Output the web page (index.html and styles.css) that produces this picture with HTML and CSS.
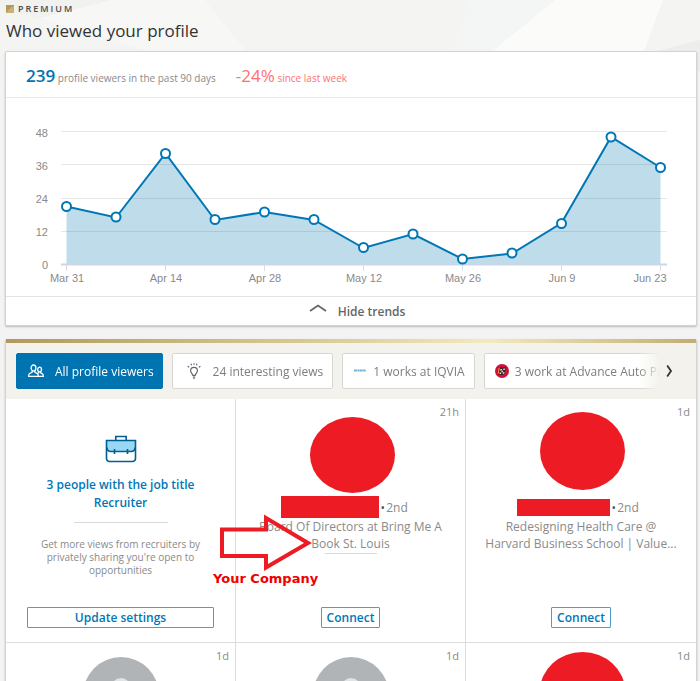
FILE: index.html
```html
<!DOCTYPE html>
<html lang="en">
<head>
    <meta charset="UTF-8">
    <meta name="viewport" content="width=device-width, initial-scale=1">
    <title>Who viewed your profile</title>
    <link rel="stylesheet" href="styles.css">
</head>
<body>
    <main class="page">
        <header class="header">
            <svg class="facets" viewBox="0 0 700 90" preserveAspectRatio="none" aria-hidden="true">
                <path d="M0 0H700V90H0z" fill="#f4f4f3"/>
                <path d="M0 0H112L40 18 0 8z" fill="#f1f1ef"/>
                <path d="M112 0H205L246 51H150L40 18z" fill="#f7f7f5"/>
                <path d="M272 0L256 51H452L470 0z" fill="#f4f4f2"/>
                <path d="M470 0H555L493 51H452z" fill="#f4f6f6"/>
                <path d="M555 0H663L644 51H493z" fill="#fbfcfa"/>
                <path d="M657 51L700 40V72z" fill="#ededec"/>
            </svg>
            <p class="premium"><span class="premium-mark"></span>PREMIUM</p>
            <h1>Who viewed your profile</h1>
        </header>

        <section class="card trends">
            <div class="summary">
                <p class="views"><strong>239</strong> profile viewers in the past 90 days</p>
                <p class="change"><strong>-24%</strong> since last week</p>
            </div>
            <svg class="chart" viewBox="0 0 690 198" role="img" aria-label="Profile viewers by week">
                <g class="grid-lines">
                    <path d="M55 33.5H661M55 66.5H661M55 100.5H661M55 133.5H661"/>
                </g>
                <path class="area" d="M60.5 166V108.5L110 119.5 159.5 55.5 209 122 258.5 114 308 122 357.5 150 407 136 456.5 161 506 155.5 555.5 125 605 39 654.5 69.5V166z"/>
                <path class="axis" d="M55 166.5H661"/>
                <path class="ticks" d="M60.5 167v6M159.5 167v6M258.5 167v6M357.5 167v6M456.5 167v6M555.5 167v6M654.5 167v6"/>
                <polyline class="line" points="60.5,108.5 110,119.5 159.5,55.5 209,122 258.5,114 308,122 357.5,150 407,136 456.5,161 506,155.5 555.5,125 605,39 654.5,69.5"/>
                <g class="points">
                    <circle cx="60.5" cy="108.5" r="4.5"/>
                    <circle cx="110" cy="119" r="4.5"/>
                    <circle cx="159.5" cy="55.5" r="4.5"/>
                    <circle cx="209" cy="121.5" r="4.5"/>
                    <circle cx="258.5" cy="114" r="4.5"/>
                    <circle cx="308" cy="121.5" r="4.5"/>
                    <circle cx="357.5" cy="149.5" r="4.5"/>
                    <circle cx="407" cy="136" r="4.5"/>
                    <circle cx="456.5" cy="161" r="4.5"/>
                    <circle cx="506" cy="155" r="4.5"/>
                    <circle cx="555.5" cy="125.5" r="4.5"/>
                    <circle cx="605" cy="39" r="4.5"/>
                    <circle cx="654.5" cy="69.5" r="4.5"/>
                </g>
                <g class="y-labels">
                    <text x="42" y="39">48</text>
                    <text x="42" y="72">36</text>
                    <text x="42" y="105">24</text>
                    <text x="42" y="138">12</text>
                    <text x="42" y="171">0</text>
                </g>
                <g class="x-labels">
                    <text x="61" y="184">Mar 31</text>
                    <text x="160" y="184">Apr 14</text>
                    <text x="259" y="184">Apr 28</text>
                    <text x="358" y="184">May 12</text>
                    <text x="457" y="184">May 26</text>
                    <text x="556" y="184">Jun 9</text>
                    <text x="644" y="184">Jun 23</text>
                </g>
            </svg>
            <button type="button" class="toggle">
                <svg width="18" height="8" viewBox="0 0 18 8" aria-hidden="true">
                    <path d="M1 7L9 1.5 17 7" fill="none" stroke="#666" stroke-width="1.8"/>
                </svg>
                Hide trends
            </button>
        </section>

        <section class="card viewers">
            <nav class="filters">
                <div class="filter-list">
                    <button type="button" class="filter active">
                        <svg width="16" height="14" viewBox="0 0 16 14" aria-hidden="true">
                            <g fill="none" stroke="#fff" stroke-width="1.3">
                                <ellipse cx="5.5" cy="4" rx="2.4" ry="3"/>
                                <path d="M4.2 6.8v1.4L1.3 9.7C.8 10 .7 10.5.7 12.3H15.3C15.3 10.5 15 10 14.2 9.6L12.6 8.8V7.8M6.8 6.8v1.4l2.6 1.4c.7.4.9.9.9 2.7"/>
                                <ellipse cx="11.6" cy="5.5" rx="1.9" ry="2.4"/>
                                <path d="M10.6 7.6v1.2l-.9.5"/>
                            </g>
                        </svg>
                        All profile viewers
                    </button>
                    <button type="button" class="filter idea">
                        <svg width="14" height="16" viewBox="0 0 14 16" aria-hidden="true">
                            <g fill="none" stroke="#666" stroke-width="1.2">
                                <path d="M5.8 12.4C5.4 10.6 3.6 9.8 3.6 7.6a3.4 3.2 0 0 1 6.8 0c0 2.200-1.800 3-2.200 4.800z"/>
                                <path d="M5.800 14H8.200M6.300 15.400H7.700M4.600 2.200L4 .8M7 1.800V.2M9.400 2.200L10 .8M2.200 4.200L.6 3.200M11.800 4.200L13.400 3.200"/>
                            </g>
                        </svg>
                        24 interesting views
                    </button>
                    <button type="button" class="filter company">
                        <svg width="14" height="14" viewBox="0 0 14 14" aria-hidden="true">
                            <path d="M1 6.500H13" stroke="#6db5d2" stroke-width="2" stroke-dasharray="3 .4 2 .3"/>
                        </svg>
                        1 works at IQVIA
                    </button>
                    <button type="button" class="filter company">
                        <svg width="14" height="14" viewBox="0 0 14 14" aria-hidden="true">
                            <circle cx="7" cy="7" r="7" fill="#d0103a"/>
                            <path d="M4.500 3.500L11 3 9.500 10.500 3.500 11z" fill="#3a2630"/>
                            <path d="M5.500 5h1.600L6.700 6.500H5zM8.500 4.500H10L9.600 6H8.200zM6.700 6.700h1.500L7.800 8.300H6.300zM4.700 8.500h1.500L5.900 10H4.400zM8 8.300h1.500L9.200 9.800H7.700z" fill="#f5dfc8"/>
                            <path d="M4.300 3.800L3.200 9.500" stroke="#f3a229"/>
                        </svg>
                        3 work at Advance Auto Pa
                    </button>
                </div>
                <button type="button" class="next" aria-label="Next filters">
                    <svg width="8" height="12" viewBox="0 0 8 12" aria-hidden="true">
                        <path d="M1.200.5L5 6 1.200 11.500" fill="none" stroke="#333" stroke-width="1.800"/>
                    </svg>
                </button>
            </nav>

            <div class="grid">
                <article class="cell promo">
                    <svg class="briefcase" width="32" height="28" viewBox="0 0 32 28" aria-hidden="true">
                        <path d="M2 5.500H30V13c0 2-1.500 3.500-4 3.500H6c-2.500 0-4-1.500-4-3.500z" fill="#98d8f4"/>
                        <g fill="none" stroke="#005e93" stroke-width="1.600">
                            <path d="M1.500 5.500H30.500V23.500a3 3 0 0 1-3 3H4.500a3 3 0 0 1-3-3z"/>
                            <path d="M10.800 5V1.500H21.200V5"/>
                            <path d="M2 12.500c0 2.500 1.500 4 4 4H26c2.500 0 4-1.500 4-4M9.500 14v5M22.500 14v5"/>
                        </g>
                    </svg>
                    <h2><a href="#">3 people with the job title Recruiter</a></h2>
                    <hr>
                    <p class="hint">Get more views from recruiters by privately sharing you're open to opportunities</p>
                    <button type="button" class="action wide">Update settings</button>
                </article>

                <article class="cell">
                    <time>21h</time>
                    <div class="photo"></div>
                    <p class="name"><span class="mask"></span><b>•</b> 2nd</p>
                    <p class="headline">Board Of Directors at Bring Me A Book St. Louis</p>
                    <hr>
                    <button type="button" class="action">Connect</button>
                </article>

                <article class="cell">
                    <time>1d</time>
                    <div class="photo tall"></div>
                    <p class="name"><span class="mask slim"></span><b>•</b> 2nd</p>
                    <p class="headline">Redesigning Health Care @ Harvard Business School | Value...</p>
                    <button type="button" class="action">Connect</button>
                </article>

                <article class="cell">
                    <time>1d</time>
                    <svg class="ghost" width="76" height="76" viewBox="0 0 76 76" aria-hidden="true">
                        <circle cx="38" cy="38" r="38" fill="#b0b4b7"/>
                        <ellipse cx="38" cy="34" rx="11" ry="13" fill="#e0e2e3"/>
                    </svg>
                </article>

                <article class="cell">
                    <time>1d</time>
                    <svg class="ghost" width="76" height="76" viewBox="0 0 76 76" aria-hidden="true">
                        <circle cx="38" cy="38" r="38" fill="#b0b4b7"/>
                        <ellipse cx="38" cy="34" rx="11" ry="13" fill="#e0e2e3"/>
                    </svg>
                </article>

                <article class="cell">
                    <time>1d</time>
                    <div class="photo high"></div>
                </article>

                <div class="callout">
                    <svg width="94" height="58" viewBox="0 0 94 58" aria-hidden="true">
                        <path d="M3 15.500H47V4L89 29 47 53.500V42H3z" fill="none" stroke="#ed1c24" stroke-width="4"/>
                    </svg>
                    <span>Your Company</span>
                </div>
            </div>
        </section>
    </main>
</body>
</html>
```

FILE: styles.css
```css
* {
    box-sizing: border-box;
}
body {
    margin: 0;
    background: #f3f3f3;
    color: #8a8a8a;
    font-family: "Open Sans", "Noto Sans", sans-serif;
    font-size: 12px;
}
h1, h2, p {
    margin: 0;
    font-weight: normal;
}
button {
    font: inherit;
    cursor: pointer;
}
a {
    color: inherit;
    text-decoration: none;
}
.page {
    height: 100vh;
    overflow: hidden;
    padding: 0 3px 0 5px;
}

/* header */
.header {
    height: 51px;
}
.facets {
    position: absolute;
    top: 0;
    left: 0;
    z-index: -1;
    width: 100%;
    height: 90px;
}
.premium {
    display: flex;
    align-items: center;
    gap: 4px;
    padding-top: 1px;
    color: #4d4d4d;
    font-size: 9px;
    font-weight: 600;
    line-height: 16px;
    letter-spacing: 2px;
}
.premium-mark {
    width: 8px;
    height: 8px;
    margin-left: 1px;
    background: linear-gradient(135deg, #b39a55 50%, #c8b273 50%);
}
h1 {
    padding-left: 1px;
    color: #333;
    font-size: 17px;
    line-height: 28px;
}

.card {
    background: #fff;
    border: 1px solid #d3d3d3;
    border-radius: 2px;
    box-shadow: 0 1px 2px #bbb;
}

/* trends */
.summary {
    display: flex;
    align-items: center;
    gap: 20px;
    height: 46px;
    padding: 2px 20px 0;
    border-bottom: 1px solid #e9e9e9;
    font-size: 10px;
}
.summary strong {
    font-size: 17px;
    font-weight: 600;
}
.views strong {
    color: #0073b1;
}
.change {
    color: #ff6f73;
}
.change strong {
    font-weight: normal;
}
.chart {
    display: block;
    width: 100%;
}
.grid-lines path {
    stroke: #e6e6e6;
}
.area {
    fill: #0073b1;
    fill-opacity: .25;
}
.axis {
    stroke: #ccd6eb;
    stroke-width: 2;
}
.ticks {
    stroke: #ddd;
}
.line {
    fill: none;
    stroke: #0077b5;
    stroke-width: 2;
}
.points circle {
    fill: #fff;
    stroke: #0077b5;
    stroke-width: 2;
}
.chart text {
    fill: #8a8a8a;
    font-family: "Liberation Sans", Arial, sans-serif;
    font-size: 11px;
}
.y-labels {
    text-anchor: end;
}
.x-labels {
    text-anchor: middle;
}
.toggle {
    display: flex;
    align-items: center;
    justify-content: center;
    gap: 11px;
    width: 100%;
    height: 29px;
    padding: 0 0 0 12px;
    border: 0;
    border-top: 1px solid #e3e3e3;
    background: none;
    color: #666;
    font-weight: 600;
}
.toggle svg {
    margin-bottom: 6px;
}

/* viewers */
.viewers {
    margin-top: 13px;
    border-top: 0;
}
.viewers::before {
    content: "";
    display: block;
    height: 4px;
    background: linear-gradient(90deg, #b09a5c, #ded09c 50%, #f3e9bf 70%, #c2ad73);
}
.filters {
    display: flex;
    align-items: center;
    height: 56px;
    padding-left: 10px;
    background: #f3f2ed;
}
.filter-list {
    display: flex;
    flex: 1;
    gap: 9px;
    overflow: hidden;
    -webkit-mask-image: linear-gradient(90deg, #000 calc(100% - 22px), transparent);
    mask-image: linear-gradient(90deg, #000 calc(100% - 22px), transparent);
}
.filter {
    display: flex;
    flex: none;
    align-items: center;
    gap: 6px;
    height: 36px;
    padding: 0 9px 0 10px;
    border: 1px solid #d6d6d2;
    border-radius: 2px;
    background: #fff;
    color: #7d7d7d;
    white-space: nowrap;
}
.filter.active {
    gap: 11px;
    padding: 0 8px 0 11px;
    border-color: #0073b1;
    background: #0073b1;
    color: #fff;
}
.filter.idea {
    gap: 12px;
    padding-left: 14px;
}
.next {
    display: flex;
    align-items: center;
    width: 36px;
    height: 36px;
    padding: 0 0 0 6px;
    border: 0;
    background: none;
}
.grid {
    position: relative;
    display: grid;
    grid-template-columns: repeat(3, 1fr);
    grid-auto-rows: 244px;
}
.cell {
    position: relative;
    display: flex;
    flex-direction: column;
    align-items: center;
    padding: 0 18px 14px;
    border-right: 1px solid #dedede;
    border-bottom: 1px solid #dedede;
    text-align: center;
}
.cell:nth-child(3n) {
    border-right: 0;
}
.cell.promo {
    padding-left: 21px;
    padding-right: 21px;
}
.cell time {
    position: absolute;
    top: 5px;
    right: 6px;
    font-size: 11px;
    line-height: 16px;
}
.cell hr {
    width: 52px;
    margin: 1px 0 0;
    border: 0;
    border-top: 1px solid #dadada;
}
.photo {
    width: 85px;
    height: 76px;
    margin: 18px 0 3px 3px;
    border-radius: 50%;
    background: #ed1c24;
}
.photo.tall {
    height: 78px;
    margin-top: 13px;
    margin-bottom: 6px;
}
.photo.high {
    height: 78px;
    margin-top: 9px;
}
.ghost {
    margin-top: 14px;
}
.name {
    display: flex;
    align-items: center;
    gap: 2px;
    height: 22px;
    padding-right: 12px;
}
.name b {
    color: #444;
    font-size: 8px;
}
.mask {
    width: 98px;
    height: 22px;
    background: #ed1c24;
}
.mask.slim {
    width: 93px;
    height: 17px;
    margin-left: 6px;
}
.headline {
    line-height: 17px;
}
.briefcase {
    margin-top: 36px;
}
.promo h2 {
    padding: 13px 15px 9px;
    color: #0077b5;
    font-size: 12px;
    font-weight: 600;
    line-height: 18px;
}
.promo hr {
    width: 94px;
}
.hint {
    padding-top: 15px;
    font-size: 10px;
    line-height: 13px;
}
.action {
    height: 21px;
    margin-top: auto;
    padding: 0 5px;
    border: 1px solid #4f9dcb;
    border-radius: 1px;
    background: #fff;
    color: #0077b5;
    font-weight: 600;
    line-height: 18px;
}
.action.wide {
    width: 100%;
}

/* arrow drawn over the cards */
.callout {
    position: absolute;
    top: 115px;
    left: 30%;
    color: #f00000;
    font-family: "DejaVu Sans", Verdana, sans-serif;
    font-size: 13px;
    font-weight: bold;
    line-height: 14px;
}
.callout svg {
    display: block;
    margin-left: 6px;
}
```
